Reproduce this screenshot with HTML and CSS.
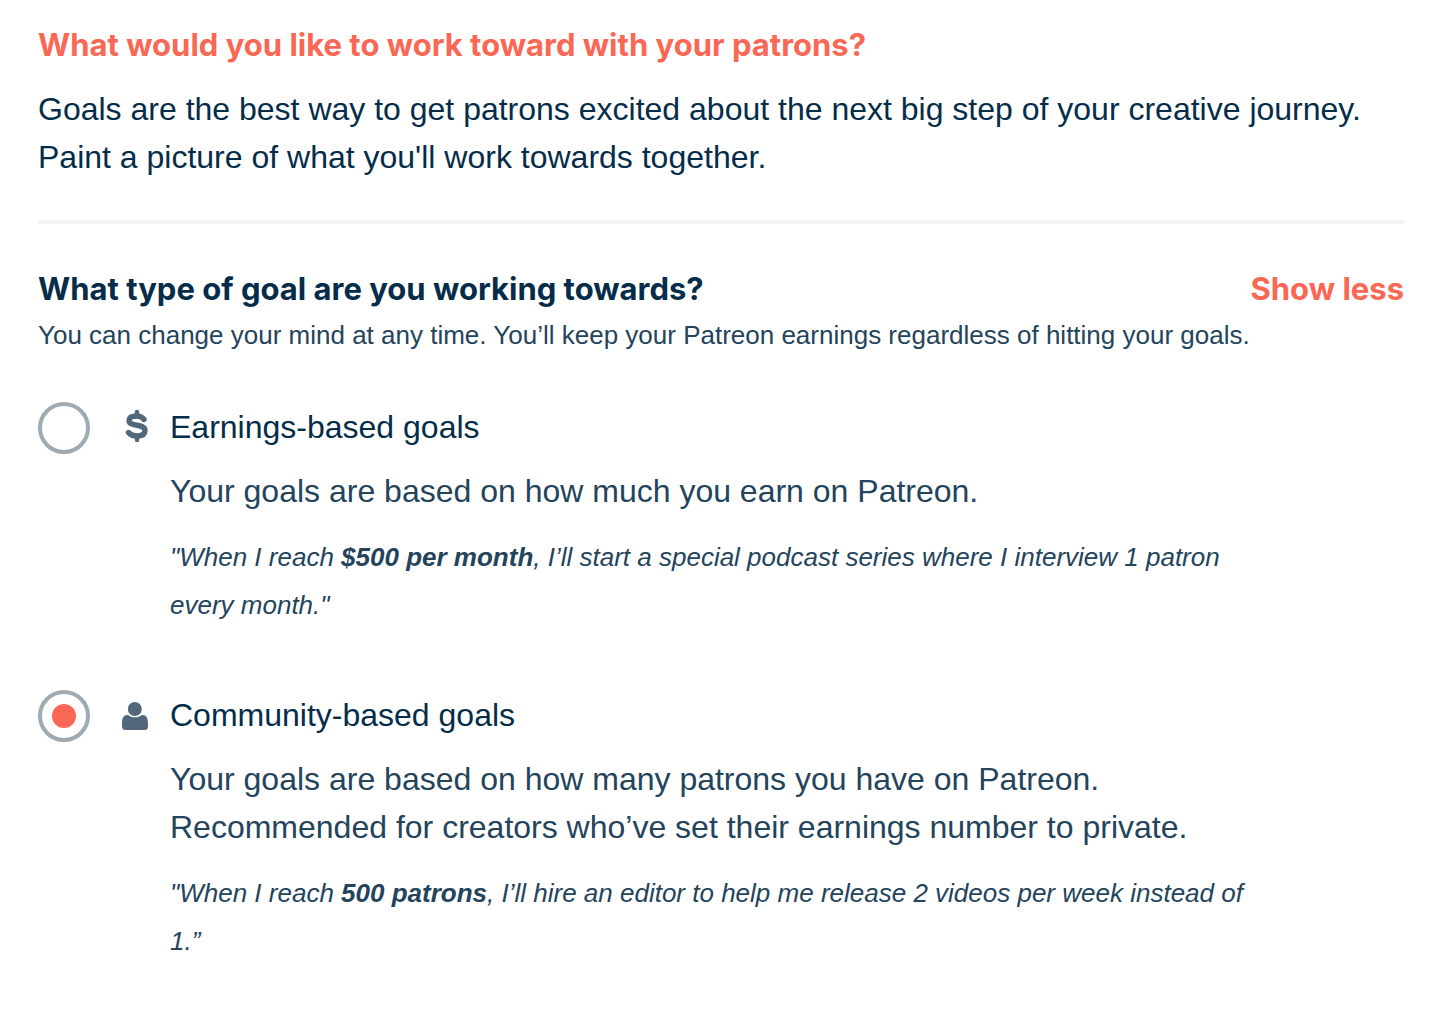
FILE: index.html
```html
<!DOCTYPE html>
<html lang="en">
<head>
  <meta charset="UTF-8">
  <meta name="viewport" content="width=device-width, initial-scale=1.0">
  <title>Goals</title>
  <link rel="stylesheet" href="styles.css">
</head>

<body>
  <main class="goals">
    <header class="intro">
      <h1>What would you like to work toward with your patrons?</h1>
      <p>Goals are the best way to get patrons excited about the next big step of your creative journey. Paint a picture of what you'll work towards together.</p>
    </header>

    <form class="goal-form">
      <div class="form-head">
        <h2 id="goalTypeLabel">What type of goal are you working towards?</h2>
        <button type="button" class="toggle">Show less</button>
      </div>
      <p class="hint">You can change your mind at any time. You’ll keep your Patreon earnings regardless of hitting your goals.</p>

      <div class="options" role="radiogroup" aria-labelledby="goalTypeLabel">
        <!-- Earnings -->
        <div class="option">
          <input type="radio" id="earnings" name="goalType" value="earnings">
          <svg class="icon" viewBox="0 0 32 36" aria-hidden="true">
            <path d="M24 11.500C22 9 20 8 17 8C12.500 8 9 9.200 9 12.500C9 19.500 25 15 25 22.500C25 26.500 21.500 28 17 28C13.500 28 10.500 27 8.500 24.500" fill="none" stroke="#52687a" stroke-width="5.400" stroke-linecap="round"/>
            <path d="M17 4V8M17 28V32" fill="none" stroke="#52687a" stroke-width="4.500" stroke-linecap="round"/>
          </svg>
          <div class="option-text">
            <label for="earnings">Earnings-based goals</label>
            <p class="description">Your goals are based on how much you earn on Patreon.</p>
            <p class="example">"When I reach <strong>$500 per month</strong>, I’ll start a special podcast series where I interview 1 patron every month."</p>
          </div>
        </div>

        <!-- Community -->
        <div class="option">
          <input type="radio" id="community" name="goalType" value="community" checked>
          <svg class="icon" viewBox="0 0 32 36" aria-hidden="true">
            <circle cx="14.800" cy="13" r="7" fill="#52687a"/>
            <path d="M7.500 19C3.500 19 2 22 2 28V30.500Q2 34 5.500 34H24.500Q28 34 28 30.500V28C28 22 26.500 19 22.500 19C21 19 20 21.300 15 21.300C10 21.300 9 19 7.500 19Z" fill="#52687a"/>
          </svg>
          <div class="option-text">
            <label for="community">Community-based goals</label>
            <p class="description">Your goals are based on how many patrons you have on Patreon. Recommended for creators who’ve set their earnings number to private.</p>
            <p class="example">"When I reach <strong>500 patrons</strong>, I’ll hire an editor to help me release 2 videos per week instead of 1.”</p>
          </div>
        </div>
      </div>
    </form>
  </main>
</body>
</html>
```
FILE: styles.css
```css
* {
  box-sizing: border-box;
}

body {
  margin: 0;
  background-color: #ffffff;
  color: #052d49;
  font-family: "Liberation Sans", Arial, sans-serif;
  font-size: 32px;
  line-height: 48px;
}

h1, h2, p {
  margin: 0;
}

h1, h2, .toggle {
  font-family: Inter, "Liberation Sans", sans-serif;
  font-size: 31px;
  line-height: 48px;
  font-weight: 700;
}

.goals {
  padding: 21px 42px 48px 38px;
}

.intro {
  padding-bottom: 39px;
  border-bottom: 4px solid #f3f3f4;
}

h1 {
  margin-bottom: 16px;
  color: #f96854;
}

.goal-form {
  padding-top: 41px;
}

.form-head {
  display: flex;
  justify-content: space-between;
}

.toggle {
  padding: 0;
  border: none;
  background: none;
  color: #f96854;
  cursor: pointer;
}

.hint {
  font-size: 26px;
  line-height: 44px;
  color: #24445c;
}

.options {
  display: grid;
  gap: 61px;
  margin-top: 45px;
}

.option {
  display: flex;
  align-items: flex-start;
}

/* Custom radio: ring from the border, dot from its own element */
input[type="radio"] {
  appearance: none;
  display: grid;
  place-content: center;
  flex: none;
  width: 52px;
  height: 52px;
  margin: 0 30px 0 0;
  border: 4px solid #9eabb3;
  border-radius: 50%;
  background-color: #ffffff;
  cursor: pointer;
}

input[type="radio"]:checked::before {
  content: "";
  width: 24px;
  height: 24px;
  border-radius: 50%;
  background-color: #f96854;
}

.icon {
  flex: none;
  width: 32px;
  height: 36px;
  margin: 6px 18px 0 0;
}

.option-text {
  flex: 1;
  max-width: 1100px;
  padding-top: 1px;
}

label {
  display: block;
  cursor: pointer;
}

.description {
  margin-top: 16px;
  color: #24445c;
}

.example {
  margin-top: 18px;
  font-size: 26px;
  font-style: italic;
  color: #24445c;
}
```
